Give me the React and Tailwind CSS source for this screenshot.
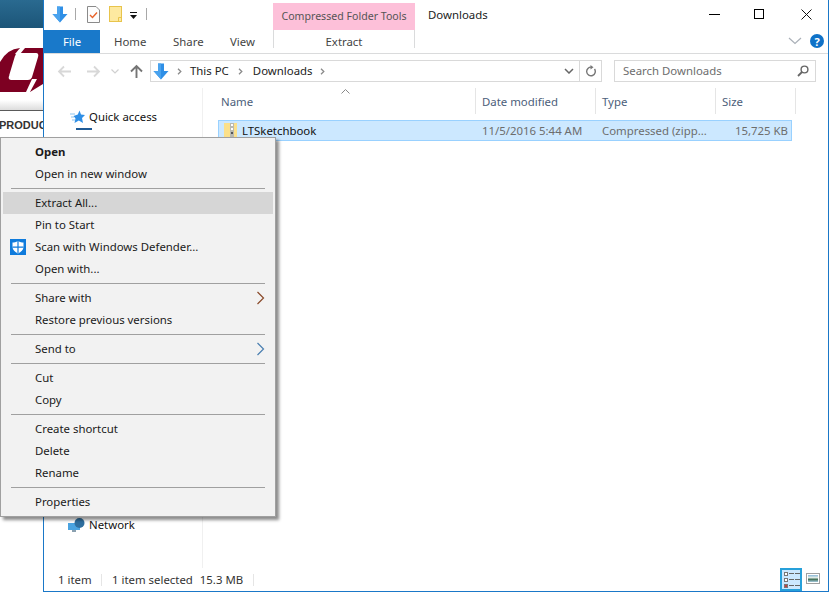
const Sep = () => (
  <div className="h-[7px] flex items-center pl-[8px] pr-[8px]">
    <div className="h-px w-full bg-[#a0a0a0]" />
  </div>
);

const Item = ({ children, bold, active, icon, arrow }) => (
  <div className={`h-[22px] flex items-center relative pl-[32px] text-[11.4px] text-[#1a1a1a] ${bold ? "font-bold" : ""} ${active ? "bg-[#d6d6d6]" : ""}`}>
    {icon && <span className="absolute left-[7px] top-[3px]">{icon}</span>}
    {children}
    {arrow && (
      <svg className="absolute right-[8px] top-[4px]" width="9" height="14" viewBox="0 0 9 14" fill="none">
        <path d="M1.5 1 L7.5 7 L1.5 13" stroke={arrow} strokeWidth="1.2" />
      </svg>
    )}
  </div>
);

const BlueArrow = ({ className }) => (
  <svg className={className} width="16" height="17" viewBox="0 0 16 17">
    <path d="M5 0.5 H11 V8 H15.5 L8 16.5 L0.5 8 H5 Z" fill="#2f8fe6" />
    <path d="M8 16.5 L0.5 8 H5 V0.5 H8 Z" fill="#4aa3ee" />
  </svg>
);

const NavArrow = ({ dir, color }) => (
  <svg width="15" height="13" viewBox="0 0 15 13" fill="none" style={{ transform: dir === "right" ? "scaleX(-1)" : "none" }}>
    <path d="M14 6.5 H2 M7 1.5 L2 6.5 L7 11.5" stroke={color} strokeWidth="1.8" />
  </svg>
);

const Crumb = ({ className }) => (
  <svg className={className} width="5" height="7" viewBox="0 0 5 7" fill="none">
    <path d="M1 0.8 L3.8 3.5 L1 6.2" stroke="#8a8a8a" strokeWidth="1.3" />
  </svg>
);

const HeaderCell = ({ w, pl, children }) => (
  <div className={`${w} ${pl} h-[26px] flex items-center pt-[2px] border-r border-[#e5e5e5] text-[11.4px] text-[#4c607a]`}>{children}</div>
);

export default function App() {
  return (
    <div className="relative w-[829px] h-[592px] overflow-hidden bg-white font-['Noto_Sans','Liberation_Sans',sans-serif] text-[11.4px] leading-none">
      {/* page behind */}
      <div className="w-[43px]">
        <div className="h-[28px] bg-[linear-gradient(180deg,#2a6a90,#1c5578)]" />
        <svg className="mt-[20px]" width="43" height="44" viewBox="0 0 43 44">
          <path d="M0 14 Q7 1 20 0 H43 V36 L30 44 H0 Z" fill="#7d0022" />
          <path d="M18 6 H36 Q38 6 37 9 L31 29 Q30 31 28 31 H11 Q9 31 10 28 L16 8 Q16.5 6 18 6 Z" fill="#fff" stroke="#fff" strokeWidth="2" strokeLinejoin="round" />
          <path d="M20 0 H25 L20 6 H15 Z" fill="#fff" />
          <path d="M32 31 H37 L30 44 H26 Z" fill="#fff" />
        </svg>
        <div className="mt-[8px] h-[10px] bg-[linear-gradient(180deg,#ffffff,#dcdcdc)]" />
        <div className="h-px bg-[#5a5a5a]" />
        <div className="mt-[9px] -ml-[1px] text-[11px] font-bold text-[#333] whitespace-nowrap font-['Liberation_Sans',sans-serif]">PRODUC</div>
      </div>

      {/* explorer window */}
      <div className="absolute left-[43px] top-0 w-[786px] h-[592px] bg-white border-l border-r border-b border-[#1a78c8] flex flex-col">
        {/* title row */}
        <div className="h-[30px] flex relative shrink-0">
          <BlueArrow className="ml-[8px] mt-[6px]" />
          <div className="ml-[7px] mt-[8px] w-px h-[12px] bg-[#a8a8a8]" />
          <svg className="ml-[11px] mt-[6px]" width="13" height="17" viewBox="0 0 13 17" fill="none">
            <path d="M0.5 0.5 H9 L12.5 4 V16.5 H0.5 Z" fill="#fdfdfd" stroke="#8a8a8a" />
            <path d="M3 9 L5.5 11.5 L10 6.5" stroke="#e8632a" strokeWidth="1.4" />
          </svg>
          <svg className="ml-[9px] mt-[6px]" width="13" height="16" viewBox="0 0 13 16">
            <rect x="0.5" y="0.5" width="12" height="15" fill="#fde9a0" stroke="#e8c44c" />
            <path d="M9.5 15 V11.5 H12.5" fill="none" stroke="#e8c44c" />
          </svg>
          <svg className="ml-[7px] mt-[12px]" width="9" height="8" viewBox="0 0 9 8">
            <path d="M1 0.5 H8" stroke="#111" />
            <path d="M1 3 H8 L4.5 7 Z" fill="#111" />
          </svg>
          <div className="ml-[8px] mt-[8px] w-px h-[12px] bg-[#a8a8a8]" />
          <div className="ml-[126px] mt-[3px] w-[142px] h-[27px] bg-[#fdc0d9] flex items-center justify-center text-[10.6px] text-[#555]">Compressed Folder Tools</div>
          <div className="ml-[13px] mt-[9px] text-[11.4px] text-[#222]">Downloads</div>
          <div className="absolute left-[665px] top-[14px] w-[11px] h-px bg-black" />
          <div className="absolute left-[710px] top-[9px] w-[10px] h-[10px] border border-black" />
          <svg className="absolute left-[757px] top-[9px]" width="11" height="11" viewBox="0 0 11 11"><path d="M0.5 0.5 L10.5 10.5 M10.5 0.5 L0.5 10.5" stroke="#111" strokeWidth="1" /></svg>
        </div>

        {/* ribbon tabs */}
        <div className="h-[24px] shrink-0 flex border-b border-[#dadbdc] relative">
          <div className="w-[56px] h-[23px] bg-[#1979ca] text-white flex items-center justify-center">File</div>
          <div className="ml-[14px] w-[45px] h-[23px] flex items-center text-[#444]">Home</div>
          <div className="w-[58px] h-[23px] flex items-center text-[#444] pl-[14px]">Share</div>
          <div className="w-[42px] h-[23px] flex items-center text-[#444] pl-[13px]">View</div>
          <div className="ml-[14px] w-[142px] h-[18px] border-l border-r border-[#dadbdc] flex items-center justify-center text-[#444] pt-[5px]">Extract</div>
          <svg className="absolute left-[744px] top-[7px]" width="14" height="8" viewBox="0 0 14 8" fill="none"><path d="M1 1 L7 6.5 L13 1" stroke="#aab0b8" strokeWidth="1.2" /></svg>
          <div className="absolute left-[766px] top-[4px] w-[14px] h-[14px] rounded-full bg-[#0f72c8] text-white font-bold text-[11px] flex items-center justify-center">?</div>
        </div>

        {/* address row */}
        <div className="h-[34px] shrink-0 flex items-start pt-[6px]">
          <div className="ml-[13px] mt-[5px]"><NavArrow color="#d8d8d8" /></div>
          <div className="ml-[14px] mt-[5px]"><NavArrow dir="right" color="#d8d8d8" /></div>
          <svg className="ml-[10px] mt-[9px]" width="8" height="5" viewBox="0 0 8 5" fill="none"><path d="M0.5 0.5 L4 4 L7.5 0.5" stroke="#d0d0d0" strokeWidth="1.2" /></svg>
          <svg className="ml-[11px] mt-[4px]" width="13" height="14" viewBox="0 0 13 14" fill="none"><path d="M6.5 14 V2 M1 7.5 L6.5 2 L12 7.5" stroke="#757575" strokeWidth="1.9" /></svg>
          <div className="ml-[7px] w-[452px] h-[22px] border border-[#d9d9d9] flex items-center">
            <BlueArrow className="ml-[2px]" />
            <Crumb className="ml-[8px]" />
            <span className="ml-[8px] text-[#222] -mt-[1px]">This PC</span>
            <Crumb className="ml-[9px]" />
            <span className="ml-[10px] text-[#222] -mt-[1px]">Downloads</span>
            <Crumb className="ml-[8px]" />
            <svg className="ml-auto mr-[5px]" width="10" height="6" viewBox="0 0 10 6" fill="none"><path d="M1 1 L5 5 L9 1" stroke="#666" strokeWidth="1.5" /></svg>
            <div className="w-px h-[20px] bg-[#d9d9d9]" />
            <svg className="mx-[5px]" width="11" height="12" viewBox="0 0 11 12" fill="none"><path d="M9.5 4 A4.3 4.3 0 1 1 6.5 2.2" stroke="#777" strokeWidth="1.4" /><path d="M5.5 0 L8.5 2.2 L5.5 4.5 Z" fill="#777" /></svg>
          </div>
          <div className="ml-[12px] w-[202px] h-[22px] border border-[#d9d9d9] flex items-center pl-[8px] text-[#6d6d6d]">
            Search Downloads
            <svg className="ml-auto mr-[6px]" width="12" height="12" viewBox="0 0 12 12" fill="none"><circle cx="7.5" cy="4.5" r="3.4" stroke="#666" strokeWidth="1.4" /><path d="M5 7 L1 11" stroke="#666" strokeWidth="1.8" /></svg>
          </div>
        </div>

        {/* body */}
        <div className="flex-1 flex min-h-0">
          <div className="w-[159px] border-r border-[#f0f0f0] relative flex flex-col">
            <div className="mt-[22px] ml-[26px] flex items-center h-[14px]">
              <svg width="15" height="14" viewBox="0 0 15 14" fill="none">
                <path d="M9.5 0.5 L11 4.5 L15 5 L12 8 L13 13 L8.8 10.5 L4.5 13 L5.5 8.5 L3.5 6 L7.8 4.5 Z" fill="#2f8fe6" />
                <path d="M0 4 H5 M1 7 H4 M2 10 H5" stroke="#8cc4ef" strokeWidth="1" />
              </svg>
              <span className="ml-[4px] text-[#111]">Quick access</span>
            </div>
            <div className="ml-[32px] mt-[4px] w-[16px] h-[2px] bg-[#1e5a96]" />
            <div className="mt-auto mb-[35px] ml-[24px] flex items-center h-[16px]">
              <svg width="17" height="15" viewBox="0 0 17 15">
                <rect x="0" y="5" width="12" height="7" fill="#4aa3e0" />
                <rect x="4" y="12" width="4" height="2" fill="#8aa0b0" />
                <circle cx="11.5" cy="5" r="5" fill="#2f6f9f" />
              </svg>
              <span className="ml-[4px] text-[#111]">Network</span>
            </div>
          </div>
          <div className="flex-1 pl-[14px] min-w-0 relative">
            <svg className="absolute left-[138px] top-[1px]" width="9" height="5" viewBox="0 0 9 5" fill="none"><path d="M0.5 4.5 L4.5 0.5 L8.5 4.5" stroke="#888" /></svg>
            <div className="flex">
              <HeaderCell w="w-[259px]" pl="pl-[4px]">Name</HeaderCell>
              <HeaderCell w="w-[120px]" pl="pl-[6px]">Date modified</HeaderCell>
              <HeaderCell w="w-[120px]" pl="pl-[6px]">Type</HeaderCell>
              <HeaderCell w="w-[80px]" pl="pl-[6px]">Size</HeaderCell>
            </div>
            <div className="mt-[6px] ml-px w-[574px] h-[21px] bg-[#cce8ff] border border-[#99d1ff] flex items-center">
              <svg className="ml-[5px]" width="13" height="15" viewBox="0 0 13 15">
                <rect x="0" y="0" width="13" height="15" fill="#fbe08a" />
                <rect x="6" y="0" width="4" height="15" fill="#b9b9b0" />
                <rect x="7" y="1" width="2" height="2" fill="#fff" />
                <rect x="7" y="5" width="2" height="2" fill="#fff" />
                <rect x="7" y="9" width="2" height="2" fill="#555" />
              </svg>
              <span className="ml-[5px] w-[240px] text-[#111]">LTSketchbook</span>
              <span className="w-[120px] text-[#6d6d6d]">11/5/2016 5:44 AM</span>
              <span className="w-[120px] text-[#6d6d6d] whitespace-nowrap">Compressed (zipp...</span>
              <span className="flex-1 text-right pr-[3px] text-[#6d6d6d]">15,725 KB</span>
            </div>
          </div>
        </div>

        {/* status bar */}
        <div className="h-[23px] shrink-0 flex items-center text-[#333] relative">
          <span className="ml-[14px] w-[43px]">1 item</span>
          <div className="w-px h-[12px] bg-[#e5e5e5]" />
          <span className="ml-[10px]">1 item selected</span>
          <span className="ml-[7px]">15.3 MB</span>
          <div className="ml-[10px] w-px h-[12px] bg-[#e5e5e5]" />
          <div className="ml-auto mr-[26px] w-[22px] h-[23px] bg-[#cce8ff] border-2 border-[#26a0da] flex flex-col justify-center gap-[2px] pl-[2px]">
            {["#fff", "#fff", "#c04040"].map((c, i) => (
              <div key={i} className="flex items-center gap-[1px]">
                <div className="w-[4px] h-[4px] border border-[#777]" style={{ backgroundColor: c }} />
                <div className="w-[5px] h-px bg-[#666]" />
                <div className="w-[5px] h-px bg-[#666]" />
              </div>
            ))}
          </div>
          <div className="absolute left-[762px] top-[5px] w-[14px] h-[11px] border border-[#a0a0a0] p-px">
            <div className="h-full bg-[linear-gradient(180deg,#8ab8d8_0%,#e8f0e8_40%,#3a6a50_60%,#a8cce0_100%)]" />
          </div>
        </div>
      </div>

      {/* context menu */}
      <div className="absolute left-0 top-[137px] w-[276px] h-[380px] bg-[#f2f2f2] border border-[#a0a0a0] shadow-[3px_3px_3px_rgba(0,0,0,0.45)] pt-[3px] pl-[2px] pr-[2px]">
        <Item bold>Open</Item>
        <Item>Open in new window</Item>
        <Sep />
        <Item active>Extract All...</Item>
        <Item>Pin to Start</Item>
        <Item icon={
          <svg width="16" height="16" viewBox="0 0 16 16">
            <rect width="16" height="16" fill="#0f7bdc" />
            <path d="M8 2 C6 3 4 3.5 2.5 3.5 V8 C2.5 11 5 13 8 14.5 C11 13 13.5 11 13.5 8 V3.5 C12 3.5 10 3 8 2 Z" fill="#fff" />
            <path d="M7.4 2 H8.6 V14 H7.4 Z M2.5 7.6 H13.5 V8.8 H2.5 Z" fill="#0f7bdc" />
          </svg>
        }>Scan with Windows Defender...</Item>
        <Item>Open with...</Item>
        <Sep />
        <Item arrow="#8a4a2a">Share with</Item>
        <Item>Restore previous versions</Item>
        <Sep />
        <Item arrow="#4a7fb0">Send to</Item>
        <Sep />
        <Item>Cut</Item>
        <Item>Copy</Item>
        <Sep />
        <Item>Create shortcut</Item>
        <Item>Delete</Item>
        <Item>Rename</Item>
        <Sep />
        <Item>Properties</Item>
      </div>
    </div>
  );
}
